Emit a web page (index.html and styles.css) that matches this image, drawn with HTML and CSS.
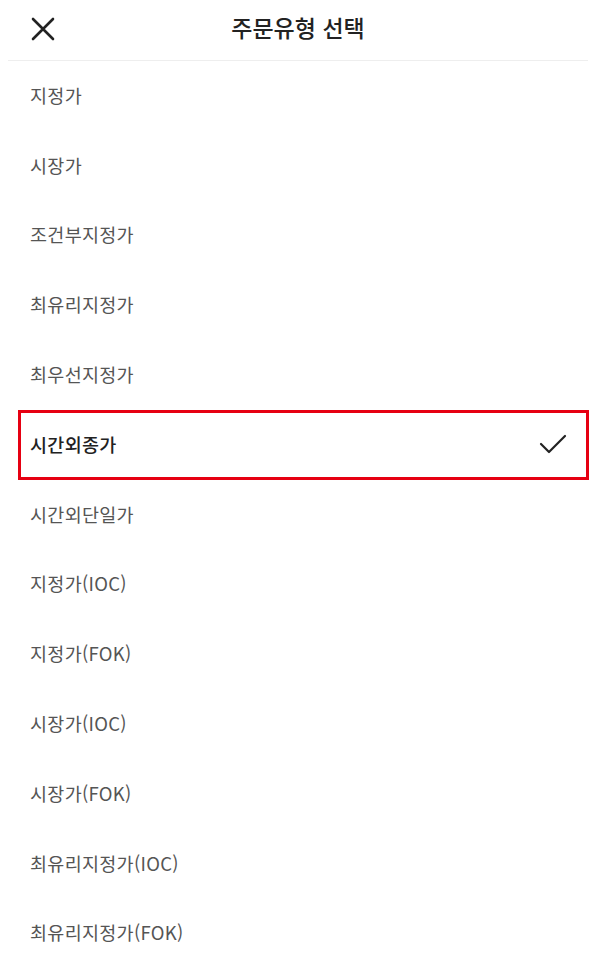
FILE: index.html
```html
<!DOCTYPE html>
<html lang="ko">
<head>
    <meta charset="UTF-8">
    <meta name="viewport" content="width=device-width, initial-scale=1.0">
    <title>주문유형 선택</title>
    <link rel="stylesheet" href="styles.css">
</head>
<body>
    <div class="sheet">
        <div class="header">
            <button class="close" aria-label="닫기">
                <svg width="24" height="24" viewBox="0 0 24 24">
                    <path d="M2 2 L22 22 M22 2 L2 22" stroke="#222" stroke-width="2.6" fill="none" stroke-linecap="round"/>
                </svg>
            </button>
            <h2>주문유형 선택</h2>
        </div>

        <ul class="types">
            <li>지정가</li>
            <li>시장가</li>
            <li>조건부지정가</li>
            <li>최유리지정가</li>
            <li>최우선지정가</li>
            <li class="selected">
                시간외종가
                <svg class="check" width="28" height="22" viewBox="0 0 28 22">
                    <path d="M2 11 L10 19 L26 3" stroke="#222" stroke-width="2.2" fill="none" stroke-linecap="round" stroke-linejoin="round"/>
                </svg>
            </li>
            <li>시간외단일가</li>
            <li>지정가(IOC)</li>
            <li>지정가(FOK)</li>
            <li>시장가(IOC)</li>
            <li>시장가(FOK)</li>
            <li>최유리지정가(IOC)</li>
            <li>최유리지정가(FOK)</li>
        </ul>
    </div>
</body>
</html>
```

FILE: styles.css
```css
body {
    margin: 0;
    background: #fff;
    font-family: "Noto Sans CJK KR", "Noto Sans", sans-serif;
    color: #222;
}
.sheet {
    width: 609px;
}
.header {
    position: relative;
    height: 60px;
    margin: 0 21px 0 8px;
    border-bottom: 1px solid #eee;
    display: flex;
    align-items: center;
    justify-content: center;
}
.header h2 {
    margin: 0 0 6px 0;
    font-size: 23px;
    font-weight: 500;
    color: #222;
}
.close {
    position: absolute;
    left: 23px;
    top: 17px;
    padding: 0;
    border: none;
    background: none;
    width: 24px;
    height: 24px;
}
.types {
    list-style: none;
    margin: 0 20px 0 18px;
    padding: 0;
}
.types li {
    box-sizing: border-box;
    height: 69.8px;
    display: flex;
    align-items: center;
    justify-content: space-between;
    padding: 0 22px 2px 12px;
    font-size: 18.5px;
    letter-spacing: 0.3px;
    color: #555;
}
.types li.selected {
    color: #222;
    font-weight: 500;
    box-shadow: inset 0 0 0 3px #e60012;
}
.check {
    display: block;
}
```
